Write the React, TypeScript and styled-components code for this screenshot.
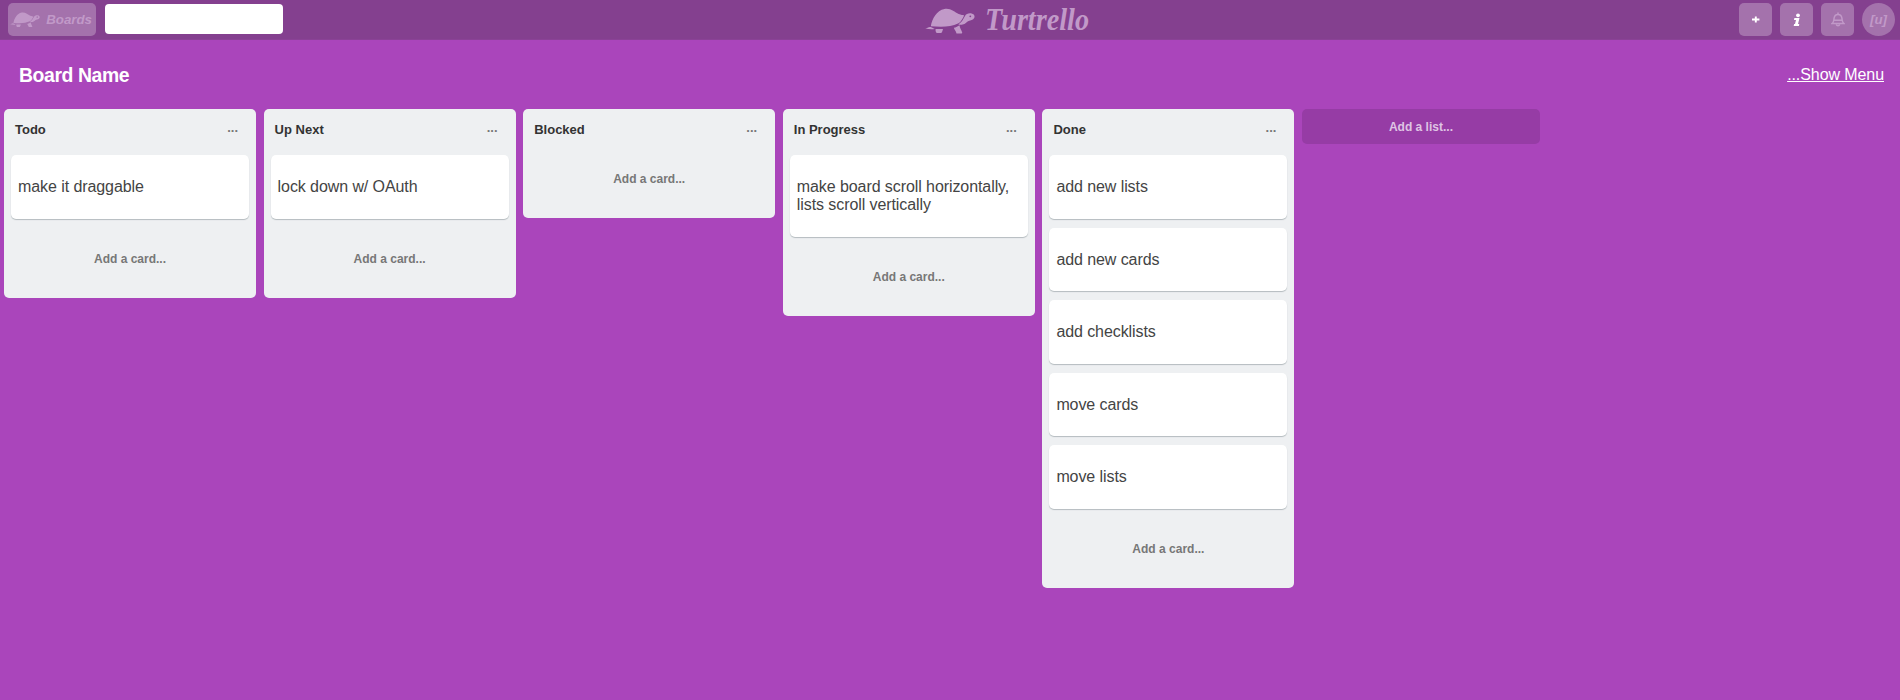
import React from "react";
import styled, { createGlobalStyle } from "styled-components";

const GlobalStyle = createGlobalStyle`
  * { box-sizing: border-box; }
  body {
    margin: 0;
    background: #aa45bb;
    font-family: "Liberation Sans", Arial, sans-serif;
    overflow: hidden;
  }
`;

const Page = styled.div`
  height: 700px;
`;

const Header = styled.header`
  height: 40px;
  background: #84408f;
  border-bottom: 1px solid #8a4296;
  display: grid;
  grid-template-columns: 917px auto 1fr;
  align-items: start;
  padding: 3px 5px 0 8px;
`;

const HeaderGroup = styled.div<{ $end?: boolean }>`
  display: flex;
  gap: ${(p) => (p.$end ? 8 : 9)}px;
  justify-content: ${(p) => (p.$end ? "flex-end" : "flex-start")};
`;

const BoardsButton = styled.button`
  width: 88px;
  height: 33px;
  padding: 0 4px 0 2px;
  border: 0;
  border-radius: 5px;
  background: #a472ac;
  color: #c199c8;
  display: flex;
  align-items: center;
  justify-content: space-between;
  font: italic bold 13.3px "Liberation Sans", Arial, sans-serif;
`;

const Search = styled.input`
  width: 178px;
  height: 30px;
  margin-top: 1px;
  border: 0;
  border-radius: 4px;
  background: #fff;
`;

const IconButton = styled.button<{ $round?: boolean; $dim?: boolean }>`
  width: 33px;
  height: 33px;
  padding: 0;
  border: 0;
  border-radius: ${(p) => (p.$round ? "50%" : "5px")};
  background: #a472ac;
  color: ${(p) => (p.$dim ? "#c199c8" : "#fff")};
  display: flex;
  align-items: center;
  justify-content: center;
  font: italic bold 13.3px "Liberation Sans", Arial, sans-serif;
`;

const Logo = styled.div`
  display: flex;
  width: 167px;
  height: 34px;
  padding-top: 5px;
  color: #c199c8;
`;

const Wordmark = styled.svg`
  margin: -5px 0 0 10px;
  overflow: visible;
  font: italic bold 31px "Liberation Serif", "Times New Roman", serif;
`;

const BoardBar = styled.div`
  height: 69px;
  display: flex;
  justify-content: space-between;
  padding: 0 16px 0 19px;
  color: #fff;
`;

const BoardName = styled.h1`
  margin: 24px 0 0;
  font-size: 19.4px;
  letter-spacing: -0.4px;
  line-height: 22px;
`;

const MenuLink = styled.a`
  margin-top: 26px;
  font-size: 16px;
  letter-spacing: -0.08px;
  line-height: 18px;
  text-decoration: underline;
`;

const Lists = styled.main`
  display: flex;
  align-items: flex-start;
  gap: 7.6px;
  padding-left: 4px;
`;

const List = styled.section`
  width: 252px;
  flex: none;
  background: #eef0f2;
  border-radius: 5px;
  padding: 0 7px;
`;

const ListHeader = styled.div`
  height: 46px;
  display: flex;
  justify-content: space-between;
  padding: 12px 11px 0 4px;
  font-size: 13px;
  font-weight: bold;
  line-height: 17px;
  color: #333;
`;

const More = styled.span`
  color: #777;
  line-height: 14px;
`;

const Cards = styled.div`
  display: flex;
  flex-direction: column;
  gap: 9px;
`;

const Card = styled.div`
  background: #fff;
  border-radius: 5px;
  box-shadow: 0 1px 1px #b4bbbf;
  padding: 23px 6px 22.6px 7px;
  min-height: 63.6px;
  font-size: 16px;
  letter-spacing: -0.08px;
  line-height: 18px;
  color: #444;
`;

const AddCard = styled.div<{ $empty: boolean }>`
  padding: ${(p) => (p.$empty ? 16 : 32)}px 0 31px;
  text-align: center;
  font-size: 12px;
  font-weight: bold;
  line-height: 16px;
  color: #777;
`;

const AddList = styled.button`
  width: 238px;
  height: 35px;
  border: 0;
  border-radius: 5px;
  background: #963ca5;
  color: #dfc4e4;
  font: bold 12px "Liberation Sans", Arial, sans-serif;
`;

const Turtle = ({ width }: { width: number }) => (
  <svg width={width} height={width * 0.52} viewBox="0 0 50 26" fill="currentColor">
    <path d="M5.8 18.2C7 11 11.5 2.5 19.5 1c6-1.1 10 3.2 14.2 5.1 2.3 1 4.3 1 5.4 1.3-1.1 2.5-3.4 6.8-6.1 8.2-7.1 3.5-17 3.4-27.2 2.6Z" />
    <path d="M40 8c1-2.3 4-3 6.6-2.5 2.3.5 3.6 2.3 2.6 4.5-1 2-3.6 2.1-5.6 3-2 .9-3.3 3-6 3.6-1.6.4-3.2.2-4.3-.1 3.1-2 4.8-4.8 6.7-8.5Z" />
    <path d="M.2 20.6c2-.2 3.3-2.1 5.5-1.6 1.7.4 2.6 1.5 4.1 2-3.1.6-6.3.2-9.6-.4ZM10.6 21h7.4c-.3 1.5-.8 3-1.7 4h-4.6c-1-.9-1.3-2.3-1.1-4ZM28.8 19.8c2-.4 4.2-1.4 5.7-2.6.2 3 2 4.8 2.7 7.2.1.7-.3 1.1-1 1.1h-4.7c-.6-2.4-2-3.5-2.7-5.7Z" />
    <circle cx="45.3" cy="8.3" r=".9" fill="#84408f" />
  </svg>
);

const Plus = () => (
  <svg width="9" height="9" viewBox="0 0 9 9" fill="none" stroke="currentColor" strokeWidth="1.9">
    <path d="M1 4.5h7.4M4.8 1.5v6" />
  </svg>
);

const Info = () => (
  <svg width="8" height="14" viewBox="0 0 8 14" fill="currentColor">
    <circle cx="5" cy="2.3" r="1.9" />
    <path d="M1.4 5h5.1l-1.5 5.9h1.3l-.4 2.1H.7l.4-2.1h.9l1-3.9H1Z" />
  </svg>
);

const Bell = () => (
  <svg width="14" height="15" viewBox="0 0 14 15" fill="none" stroke="currentColor" strokeWidth="1.5">
    <path d="M1 11.6c2-1.4 1.8-3.5 2.1-5.4C3.4 4 4.7 2.6 7 2.6s3.6 1.4 3.9 3.6c.3 1.9.1 4 2.1 5.4ZM3.2 8.2h7.6M7 .6v2M5.3 12.5c.5 1.7 2.9 1.7 3.4 0" />
  </svg>
);

const lists = [
  { name: "Todo", cards: ["make it draggable"] },
  { name: "Up Next", cards: ["lock down w/ OAuth"] },
  { name: "Blocked", cards: [] },
  { name: "In Progress", cards: ["make board scroll horizontally, lists scroll vertically"] },
  { name: "Done", cards: ["add new lists", "add new cards", "add checklists", "move cards", "move lists"] },
];

export default function App() {
  return (
    <Page>
      <GlobalStyle />
      <Header>
        <HeaderGroup>
          <BoardsButton>
            <Turtle width={30} />
            Boards
          </BoardsButton>
          <Search aria-label="Search" />
        </HeaderGroup>
        <Logo>
          <Turtle width={50} />
          <Wordmark width="106" height="34">
            <text x="0" y="27" textLength="104" lengthAdjust="spacingAndGlyphs" fill="currentColor">
              Turtrello
            </text>
          </Wordmark>
        </Logo>
        <HeaderGroup $end>
          <IconButton aria-label="Add"><Plus /></IconButton>
          <IconButton aria-label="Information"><Info /></IconButton>
          <IconButton $dim aria-label="Notifications"><Bell /></IconButton>
          <IconButton $round $dim>[u]</IconButton>
        </HeaderGroup>
      </Header>
      <BoardBar>
        <BoardName>Board Name</BoardName>
        <MenuLink>...Show Menu</MenuLink>
      </BoardBar>
      <Lists>
        {lists.map((list) => (
          <List key={list.name}>
            <ListHeader>
              {list.name}
              <More>...</More>
            </ListHeader>
            <Cards>
              {list.cards.map((text) => (
                <Card key={text}>{text}</Card>
              ))}
            </Cards>
            <AddCard $empty={list.cards.length === 0}>Add a card...</AddCard>
          </List>
        ))}
        <AddList>Add a list...</AddList>
      </Lists>
    </Page>
  );
}
